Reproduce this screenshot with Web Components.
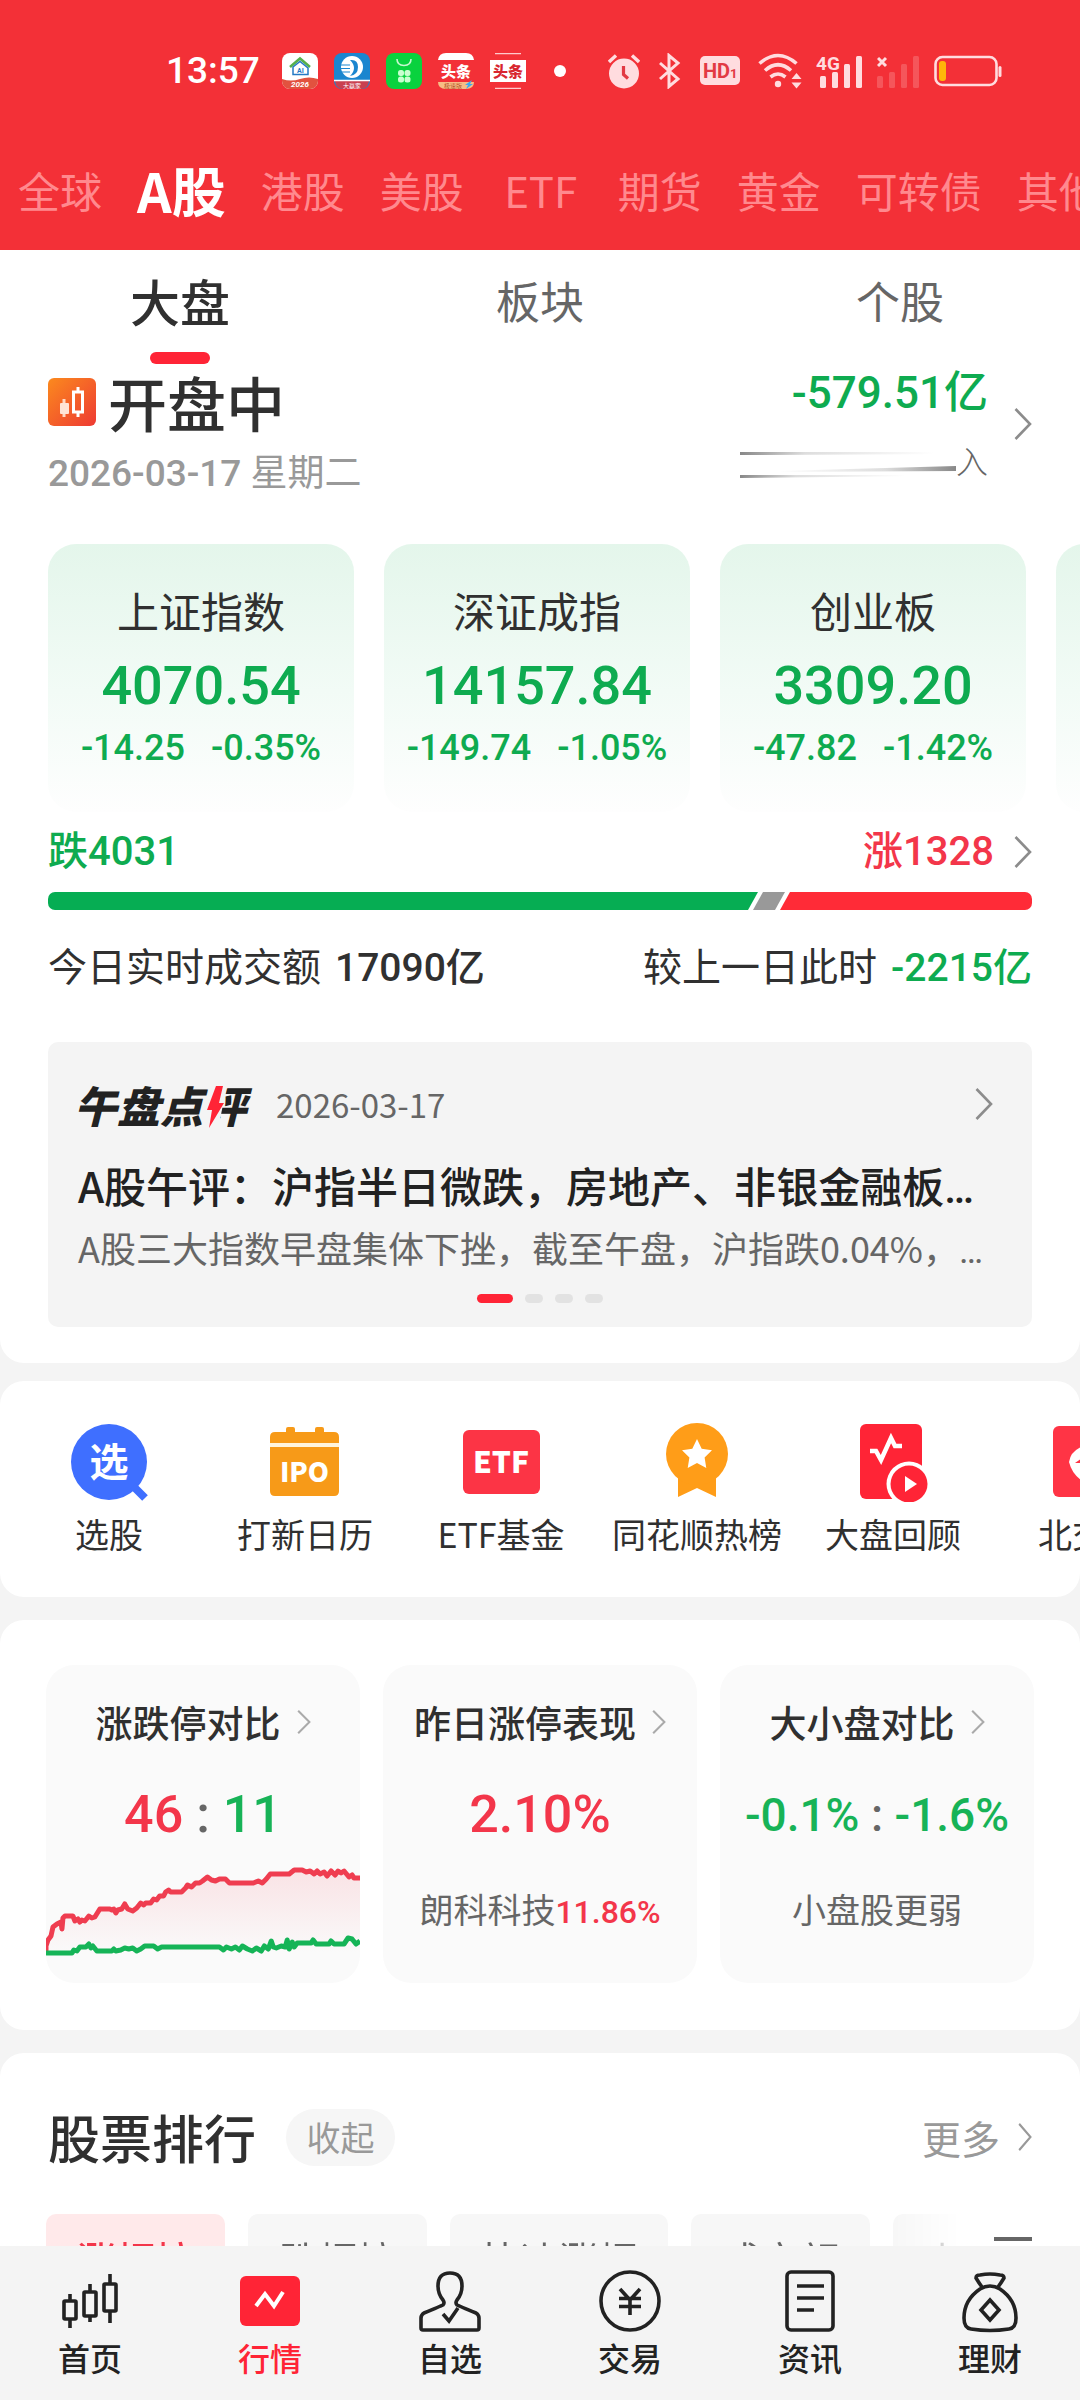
<!DOCTYPE html>
<html lang="zh-CN">
<head>
<meta charset="utf-8">
<meta name="viewport" content="width=device-width, initial-scale=1">
<title>行情 - A股</title>
<style>
  :root {
    --cjk: "Noto Sans CJK SC", "Noto Sans", sans-serif;
    --num: Roboto, "Noto Sans CJK SC", sans-serif;
    --up: #f3364a;
    --bright: #ff2436;
    --down: #0eab50;
    --ink: #303030;
    --muted: #666;
    --faint: #999;
    --page: #f4f4f4;
  }
  body { margin: 0; background: var(--page); font-family: var(--cjk); color: var(--ink); }
</style>
</head>
<body>
<market-app></market-app>

<script>
const BASE = `
  *, *::before, *::after { box-sizing: border-box; }
  button { font: inherit; color: inherit; background: none; border: 0; padding: 0; margin: 0; cursor: pointer; }
  a { color: inherit; text-decoration: none; }
  h1, h2, h3, p { margin: 0; font: inherit; }
  svg { display: block; flex: none; }
`;
function define(name, css, html) {
  customElements.define(name, class extends HTMLElement {
    constructor() {
      super();
      const root = this.attachShadow({ mode: 'open' });
      const t = document.createElement('template');
      t.innerHTML = `<style>${BASE}${css}</style>` + (typeof html === 'function' ? html(this) : html);
      root.append(t.content.cloneNode(true));
    }
  });
}

/* chevron used by every "more" affordance */
define('chevron-icon', `
  :host { display: block; flex: none; width: 18px; height: 32px; color: #8c8c8c; }
  :host([small]) { width: 14px; height: 24px; color: #aaa; }
  :host([medium]) { width: 14px; height: 28px; color: #999; }
  svg { width: 100%; height: 100%; }
`, `<svg viewBox="0 0 18 32" preserveAspectRatio="none" aria-hidden="true"><path d="M1.5 1 16 16 1.5 31" fill="none" stroke="currentColor" stroke-width="2.6"/></svg>`);

define('status-bar', `
  :host { display: flex; align-items: center; height: 142px; padding: 0 78px 0 166px; color: #fff; }
  .time { font: 500 37px/40px var(--num); margin-right: 22px; }
  .apps { display: flex; align-items: center; gap: 16px; }
  .dot { width: 12px; height: 12px; border-radius: 50%; background: #fff; margin-left: 28px; }
  .sys { display: flex; align-items: center; margin-left: auto; gap: 14px; color: #ffdcdf; }
  .wide { display: flex; align-items: center; gap: 18px; margin-right: 4px; }
`, `
  <span class="time">13:57</span>
  <span class="apps">
    <svg width="36" height="36" viewBox="0 0 36 36"><defs><clipPath id="r"><rect width="36" height="36" rx="8"/></clipPath></defs><g clip-path="url(#r)"><rect width="36" height="36" fill="#fff"/><path d="M0 26q9 3 18 0t18 0v10H0z" fill="#e2523f"/></g><path d="M8 14 18 5.500l10 8.500" fill="none" stroke="#57b04a" stroke-width="2.600"/><path d="M11 14 18 8.500l8 6.500v6.500H11z" fill="none" stroke="#2579c4" stroke-width="1.500"/><text x="18.500" y="20" font-family="Roboto" font-size="7" font-weight="700" text-anchor="middle" fill="#2579c4">AI</text><text x="18" y="34" font-family="Roboto" font-style="italic" font-weight="700" font-size="8" text-anchor="middle" fill="#fff">2026</text></svg>
    <svg width="36" height="36" viewBox="0 0 36 36"><rect width="36" height="36" rx="8" fill="#1b86cf"/><path d="M1 28h34q-1 8-8 8H9q-7 0-8-8z" fill="#c9404f"/><path d="M0 27.500h36" stroke="#fff" stroke-width="1.500"/><circle cx="18" cy="14" r="11" fill="#fff"/><path d="M16 7q8-1 8 7t-8 9q4-4 4-8t-4-8z" fill="#1b86cf"/><path d="M7 12h9M7 15.500h9M8 19h8" stroke="#1b86cf" stroke-width="1.200"/><text x="18" y="34.500" font-family="Noto Sans CJK SC" font-size="6" text-anchor="middle" fill="#fff">大赢家</text></svg>
    <svg width="36" height="36" viewBox="0 0 36 36"><rect width="36" height="36" rx="8" fill="#09d23e"/><path d="M11 6q0 6.500 7 6.500T25 6" fill="none" stroke="#c7f8cf" stroke-width="1.600"/><g fill="#c9ffd0"><rect x="12" y="17" width="6" height="6" rx="2.500"/><rect x="18.500" y="17" width="6" height="6" rx="2.500"/><rect x="12" y="23.500" width="6" height="6" rx="2.500"/><rect x="18.500" y="23.500" width="6" height="6" rx="2.500"/></g></svg>
    <svg width="36" height="36" viewBox="0 0 36 36"><path d="M0 7q1-7 8-7h20q7 0 8 7z" fill="#fff"/><path d="M0 29h36q0 7-8 7H8q-8 0-8-7z" fill="#f7bd85"/><text x="18" y="24" font-family="Noto Sans CJK SC" font-weight="900" font-size="15" text-anchor="middle" fill="#fff">头条</text><text x="15" y="35" font-family="Noto Sans CJK SC" font-size="6" text-anchor="middle" fill="#b3552c">极速版</text><path d="m34 27-7 5h3l-2 4 7-5h-3z" fill="#3aa9f0"/></svg>
    <svg width="36" height="36" viewBox="0 0 36 36"><path d="M5 .700h26M5 35.300h26" stroke="#ffc9cc" stroke-width="1.200"/><rect y="7" width="36" height="22" fill="#fff"/><text x="18" y="24" font-family="Noto Sans CJK SC" font-weight="900" font-size="15" text-anchor="middle" fill="#d8262f">头条</text></svg>
  </span>
  <span class="dot"></span>
  <span class="sys">
    <span class="wide">
    <svg width="32" height="36" viewBox="0 0 32 36"><circle cx="16" cy="20.500" r="15" fill="currentColor"/><path d="m1 9 7-6.500M31 9l-7-6.500" stroke="currentColor" stroke-width="3.400"/><path d="M15.500 13v8.500l4.500 4" fill="none" stroke="#e23a44" stroke-width="3.200"/></svg>
    <svg width="24" height="36" viewBox="0 0 24 36"><path d="m2 10 18 16-9 7.500V2.500L20 10 2 26" fill="none" stroke="currentColor" stroke-width="3"/></svg>
    <svg width="40" height="30" viewBox="0 0 40 30"><rect width="40" height="29" rx="5" fill="currentColor"/><text x="3" y="22" font-family="Roboto" font-weight="700" font-size="20" fill="#e23a44">HD</text><text x="30" y="22" font-family="Roboto" font-weight="700" font-size="13" fill="#e23a44">1</text></svg>
    </span>
    <svg width="44" height="36" viewBox="0 0 44 36"><g fill="none" stroke="currentColor" stroke-width="3.600"><path d="M1.500 10.500q18.500-16 37 0"/><path d="M7 17.500q13-11.500 26 0"/><path d="M12.500 24q7.500-6 15 0"/></g><circle cx="20" cy="31" r="3.200" fill="currentColor"/><path d="m38.500 20 5 6h-10zM38.500 35.500l5-6h-10z" fill="currentColor"/></svg>
    <svg width="47" height="36" viewBox="0 0 47 36"><g fill="currentColor"><rect x="4" y="23" width="6" height="12" rx="1.500"/><rect x="16" y="19" width="6" height="16" rx="1.500"/><rect x="28" y="11" width="6" height="24" rx="1.500"/><rect x="40" y="3" width="6" height="32" rx="1.500"/><text x="0" y="17" font-family="Roboto" font-weight="700" font-size="19">4G</text></g></svg>
    <svg width="43" height="36" viewBox="0 0 43 36"><g fill="#fff" opacity=".18"><rect y="23" width="6" height="12" rx="1.500"/><rect x="12" y="19" width="6" height="16" rx="1.500"/><rect x="24" y="11" width="6" height="24" rx="1.500"/><rect x="36" y="3" width="6" height="32" rx="1.500"/></g><path d="m1 5 8 8M9 5l-8 8" stroke="currentColor" stroke-width="3"/></svg>
    <svg width="68" height="32" viewBox="0 0 68 32"><rect x="1.500" y="2" width="61" height="28" rx="7" fill="none" stroke="currentColor" stroke-width="2.600"/><rect x="5" y="6" width="7" height="20" rx="3" fill="#ffb60a"/><rect x="64.500" y="11" width="3" height="11" rx="1.500" fill="currentColor"/></svg>
  </span>
`);

define('market-tabs', `
  :host { display: block; overflow: hidden; }
  nav { display: flex; align-items: center; gap: 35px; height: 108px; padding: 0 0 12px 18px; }
  button { flex: none; min-width: 84px; font-size: 42px; line-height: 60px; color: #ff898e; white-space: nowrap; }
  button[aria-current] { font-size: 54px; font-weight: 700; color: #fff; }
`, `<nav aria-label="市场">
  <button>全球</button><button aria-current="page">A股</button><button>港股</button><button>美股</button><button>ETF</button><button>期货</button><button>黄金</button><button>可转债</button><button>其他</button>
</nav>`);

define('board-tabs', `
  :host { display: block; }
  nav { display: grid; grid-template-columns: repeat(3, 1fr); }
  button { display: flex; flex-direction: column; align-items: center; gap: 22px; padding-top: 20px; font-size: 44px; line-height: 60px; color: var(--muted); }
  button[aria-current] { font-size: 50px; font-weight: 500; color: var(--ink); }
  button::after { content: ""; width: 60px; height: 12px; border-radius: 6px; }
  button[aria-current]::after { background: var(--bright); }
`, `<nav aria-label="板面"><button aria-current="page">大盘</button><button>板块</button><button>个股</button></nav>`);

define('market-head', `
  :host { display: flex; justify-content: space-between; align-items: flex-start; padding: 4px 48px 0; }
  .title { display: flex; align-items: center; gap: 12px; }
  h1 { font-size: 59px; font-weight: 500; line-height: 68px; }
  .date { margin-top: 18px; font: 500 37px/40px var(--num); color: var(--faint); }
  .date span { font-weight: 400; }
  a { display: flex; align-items: center; gap: 26px; }
  .flow { display: flex; flex-direction: column; align-items: flex-end; gap: 22px; }
  .value { font: 500 44px/50px var(--num); color: var(--down); }
  .label { display: flex; align-items: center; font-size: 32px; line-height: 40px; font-weight: 300; color: var(--muted); }
`, `
  <div>
    <div class="title">
      <svg width="48" height="48" viewBox="0 0 48 48"><defs><linearGradient id="g" x1="0" y1="0" x2="1" y2="1"><stop offset="0" stop-color="#fb8a1e"/><stop offset="1" stop-color="#ee3a33"/></linearGradient></defs><rect width="48" height="48" rx="6" fill="url(#g)"/><path d="M16 21v18" stroke="#ffd9c4" stroke-width="3"/><rect x="12" y="25" width="9" height="11" rx="1" fill="#ffe5d6"/><path d="M30 9v5M30 34v5" stroke="#fff" stroke-width="3"/><rect x="25.500" y="14" width="9" height="20" fill="none" stroke="#fff" stroke-width="3"/></svg>
      <h1>开盘中</h1>
    </div>
    <p class="date">2026-03-17 <span>星期二</span></p>
  </div>
  <a href="#flow">
    <div class="flow">
      <span class="value">-579.51亿</span>
      <span class="label">
        <svg width="216" height="40" viewBox="0 0 222 40" preserveAspectRatio="none" aria-hidden="true"><defs><linearGradient id="a"><stop offset="0" stop-color="#888"/><stop offset=".300" stop-color="#ddd"/><stop offset=".900" stop-color="#fff"/></linearGradient><linearGradient id="b"><stop offset="0" stop-color="#fff"/><stop offset=".600" stop-color="#ddd"/><stop offset="1" stop-color="#888"/></linearGradient></defs><path d="M0 12h222v2L0 15z" fill="url(#a)"/><path d="M40 31 222 26v5L40 32z" fill="url(#b)"/><path d="M0 35h190v1L0 38z" fill="url(#a)"/></svg>入
      </span>
    </div>
    <chevron-icon></chevron-icon>
  </a>
`);

define('index-card', `
  :host { display: block; flex: none; width: 306px; padding: 36px 0 46px; border-radius: 28px; background: linear-gradient(#e4f6eb, #f2fbf6 55%, #fefefe); text-align: center; white-space: nowrap; }
  h3 { font-size: 42px; line-height: 60px; }
  .value { margin: 14px 0 12px; font: 500 54px/64px var(--num); color: var(--down); }
  .change { display: flex; justify-content: center; gap: 26px; font: 500 36px/36px var(--num); color: var(--down); }
`, el => `<h3><slot></slot></h3><p class="value">${el.getAttribute('value') || ''}</p><p class="change"><span>${el.getAttribute('diff') || ''}</span><span>${el.getAttribute('rate') || ''}</span></p>`);

define('index-strip', `
  :host { display: flex; gap: 30px; overflow: hidden; margin-top: 50px; padding-left: 48px; }
`, `
  <index-card value="4070.54" diff="-14.25" rate="-0.35%">上证指数</index-card>
  <index-card value="14157.84" diff="-149.74" rate="-1.05%">深证成指</index-card>
  <index-card value="3309.20" diff="-47.82" rate="-1.42%">创业板</index-card>
  <index-card></index-card>
`);

define('market-breadth', `
  :host { display: block; padding: 16px 48px 0; }
  .row { display: flex; justify-content: space-between; align-items: center; font: 500 40px/48px var(--num); }
  .down { color: var(--down); }
  .up { color: var(--up); }
  a { display: flex; align-items: center; gap: 20px; }
  .bar { display: flex; height: 18px; margin: 16px 0 34px; border-radius: 7px; overflow: hidden; }
  .bar i { display: block; }
  .fall { flex: 710; background: #06ad53; clip-path: polygon(0 0, 100% 0, calc(100% - 10px) 100%, 0 100%); }
  .flat { width: 32px; background: #999; margin: 0 -5px; clip-path: polygon(10px 0, 100% 0, calc(100% - 10px) 100%, 0 100%); }
  .rise { flex: 252; background: #ff2b37; clip-path: polygon(10px 0, 100% 0, 100% 100%, 0 100%); }
  .turnover { font-size: 39px; }
  .turnover div { display: flex; gap: 14px; }
  .turnover span { font-weight: 400; }
  .turnover b { font-weight: 500; }
`, `
  <div class="row"><span class="down">跌4031</span><a href="#breadth"><span class="up">涨1328</span><chevron-icon></chevron-icon></a></div>
  <div class="bar"><i class="fall"></i><i class="flat"></i><i class="rise"></i></div>
  <div class="row turnover"><div><span>今日实时成交额</span><b>17090亿</b></div><div><span>较上一日此时</span><b class="down">-2215亿</b></div></div>
`);

define('news-card', `
  :host { display: block; margin: 50px 48px 0; padding: 38px 30px 24px; border-radius: 10px; background: #f4f4f4; }
  a { display: block; }
  .head { display: flex; align-items: center; }
  .logo { position: relative; margin-left: -4px; font-size: 43px; font-weight: 900; font-style: italic; line-height: 48px; color: #222; white-space: nowrap; }
  .logo svg { position: absolute; left: 128px; top: 2px; }
  time { margin-left: 30px; font-size: 33px; line-height: 48px; color: var(--muted); }
  chevron-icon { margin-left: auto; margin-right: 9px; }
  h3 { margin-top: 31px; font-size: 42px; font-weight: 500; line-height: 52px; color: #222; white-space: nowrap; }
  p { margin-top: 14px; font-size: 36px; line-height: 44px; color: var(--muted); white-space: nowrap; }
  .more { font-family: Roboto, sans-serif; line-height: 1; }
  .dots { display: flex; justify-content: center; gap: 12px; margin-top: 25px; }
  .dots i { width: 18px; height: 9px; border-radius: 5px; background: #e2e2e2; }
  .dots i:first-child { width: 36px; background: var(--bright); }
`, `
  <a href="#news">
    <div class="head">
      <span class="logo">午盘点评<svg width="30" height="48" viewBox="0 0 30 48"><path d="M10 2H25L16 48H1z" fill="#f4f4f4"/><path d="M14 4h7l-4 17h5L7 46l3-18H5z" fill="#ff2436"/></svg></span>
      <time datetime="2026-03-17">2026-03-17</time>
      <chevron-icon></chevron-icon>
    </div>
    <h3>A股午评：沪指半日微跌，房地产、非银金融板<span class="more">…</span></h3>
    <p>A股三大指数早盘集体下挫，截至午盘，沪指跌0.04%，<span class="more">…</span></p>
  </a>
  <div class="dots"><i></i><i></i><i></i><i></i></div>
`);

define('quick-entry', `
  :host { display: block; flex: none; width: 196px; }
  a { display: flex; flex-direction: column; align-items: center; gap: 12px; font-size: 34px; line-height: 40px; white-space: nowrap; }
  ::slotted(svg) { display: block; width: 80px; height: 80px; }
`, `<a href="#entry"><slot name="icon"></slot><span><slot></slot></span></a>`);

define('quick-entries', `
  :host { display: flex; overflow: hidden; margin-top: 18px; padding: 41px 0 43px 11px; border-radius: 24px; background: #fff; }
`, `
  <quick-entry><svg slot="icon" viewBox="0 0 80 80"><circle cx="40" cy="40" r="38" fill="#3f6fff"/><path d="m64 64 12 12" stroke="#3f6fff" stroke-width="8"/><text x="40" y="54" font-family="Noto Sans CJK SC" font-weight="700" font-size="39" text-anchor="middle" fill="#fff">选</text></svg>选股</quick-entry>
  <quick-entry><svg slot="icon" viewBox="0 0 80 80"><path d="M5 21V15q0-5 5-5h11V7q0-2 2-2h5q2 0 2 2v3h20V7q0-2 2-2h5q2 0 2 2v3h10q5 0 5 5v6z" fill="#f79a18"/><path d="M5 25h69v44q0 5-5 5H10q-5 0-5-5z" fill="#f79a18"/><path d="M5 21h69v4H5z" fill="#fff4dc"/><text x="39.500" y="60" font-family="Noto Sans CJK SC" font-weight="900" font-size="27" text-anchor="middle" fill="#fff">IPO</text></svg>打新日历</quick-entry>
  <quick-entry><svg slot="icon" viewBox="0 0 80 80"><rect x="2" y="8" width="77" height="64" rx="6" fill="#fc3445"/><text x="40" y="51" font-family="Noto Sans CJK SC" font-weight="900" font-size="30" text-anchor="middle" fill="#fff">ETF</text></svg>ETF基金</quick-entry>
  <quick-entry><svg slot="icon" viewBox="0 0 80 80"><path d="M21 52h38v23L40 66 21 75z" fill="#ff9d18"/><circle cx="40" cy="32" r="31" fill="#ff9d18"/><path d="m40 17 4.700 9.700 10.300 1.500-7.400 7.300 1.700 10.500-9.300-4.900-9.300 4.900 1.700-10.500-7.400-7.300 10.300-1.500z" fill="#fff"/></svg>同花顺热榜</quick-entry>
  <quick-entry><svg slot="icon" viewBox="0 0 80 80"><rect x="7" y="2" width="62" height="75" rx="6" fill="#ff2436"/><path d="M17 29h6l5 9 10-22 4 8h7" fill="none" stroke="#fff" stroke-width="4.500"/><circle cx="56" cy="62" r="22.500" fill="#fff"/><circle cx="56" cy="62" r="18.500" fill="#ff2436"/><path d="m52 54 12 8-12 8z" fill="#fff"/></svg>大盘回顾</quick-entry>
  <quick-entry><svg slot="icon" viewBox="0 0 80 80"><rect x="4" y="4" width="72" height="71" rx="6" fill="#ff3445"/><path d="M20 40q2-14 22-18h14v40H40Q24 56 20 40z" fill="#fff"/><path d="m26 41 7-5v5z" fill="#ff3445"/></svg>北交所</quick-entry>
`);

define('metric-card', `
  :host { display: flex; flex-direction: column; align-items: center; min-width: 0; padding-top: 35px; border-radius: 28px; overflow: hidden; background: #fafafa; white-space: nowrap; }
  h3 { display: flex; align-items: center; gap: 16px; font-size: 37px; font-weight: 500; line-height: 44px; }
  .value { margin-top: 41px; font: 500 52px/60px var(--num); color: var(--muted); }
  :host([compact]) .value { font-size: 46px; }
  ::slotted([slot="note"]) { margin: 46px 0 51px; font: 400 34px/40px var(--num); color: var(--muted); }
`, `<h3><slot></slot><chevron-icon small></chevron-icon></h3><div class="value"><slot name="value"></slot></div><slot name="note"></slot><slot name="chart"></slot>`);

define('trend-chart', `
  :host { display: block; width: 100%; }
  svg { width: 100%; height: 137px; }
`, `<svg viewBox="0 2 315 137" preserveAspectRatio="none" aria-hidden="true">
  <defs><linearGradient id="f" x1="0" y1="0" x2="0" y2="1"><stop offset="0" stop-color="#f3364a" stop-opacity=".120"/><stop offset="1" stop-color="#f3364a" stop-opacity="0"/></linearGradient></defs>
  <path d="M0 109 2 97 7 84 19 73H27L29 78H39L54 66H64L79 62 87 68 97 60 112 54 123 48H136L142 43 162 35 184 40H218L225 31H244L249 27H257L299 30 315 35V110H0z" fill="url(#f)"/>
  <path d="M0 110V103L2 97 5 93 7 84 11 81 15 79 16 86 17 75 19 73H27L29 78 32 76 34 79 36 77 39 78 43 73 46 75 49 74 54 66H64L66 67 68 66 70 70 72 67 76 66 79 61 82 66 87 68 91 65 95 60 98 62 100 60H105L108 56 111 57 114 53 118 53 120 49 123 47 125 49H136L140 45 142 42 146 44 150 40H154L157 38 162 34 166 37 170 38 174 36 180 36 184 40H208L213 38 217 40 221 36 225 31H244L249 27H257L261 29 265 28 269 31 272 28 275 31 279 29 282 33 286 28 290 32 293 28 296 30 299 28 304 34 307 32 309 35H315" fill="none" stroke="#ef3d50" stroke-width="5" stroke-linejoin="round"/>
  <path d="M0 110H26L28 107 31 108 34 104H40L43 101 45 105 47 103 51 108H66L68 106 70 108 75 107 79 105 83 106 87 105 91 108 95 106 99 103H108L112 106 116 104H174L178 107 181 104 186 106 190 104 194 107 197 103 202 106 207 108 211 105 216 108 219 103 223 106 226 98 228 104 231 105 236 103 240 104 242 97 244 106 247 99 249 104 252 100H266L268 97 271 101H284L286 98 289 101H299L303 95 307 96 311 101 315 98" fill="none" stroke="#15b457" stroke-width="5" stroke-linejoin="round"/>
</svg>`);

define('metric-section', `
  :host { display: block; margin-top: 23px; padding: 45px 46px 47px; border-radius: 24px; background: #fff; }
  .grid { display: grid; grid-template-columns: repeat(3, minmax(0, 1fr)); gap: 23px; }
  .up { color: var(--up); }
  .down { color: #17b357; }
  em { font-style: normal; font-weight: 500; font-size: 32px; color: var(--up); }
`, `<div class="grid">
  <metric-card>涨跌停对比<span slot="value"><span class="up">46</span> : <span class="down">11</span></span><trend-chart slot="chart"></trend-chart></metric-card>
  <metric-card>昨日涨停表现<span slot="value" class="up">2.10%</span><span slot="note">朗科科技<em>11.86%</em></span></metric-card>
  <metric-card compact>大小盘对比<span slot="value"><span class="down">-0.1%</span> : <span class="down">-1.6%</span></span><span slot="note">小盘股更弱</span></metric-card>
</div>`);

define('rank-section', `
  :host { display: block; margin-top: 23px; padding: 50px 46px 60px; border-radius: 24px; background: #fff; }
  .head { display: flex; align-items: center; height: 68px; padding-left: 2px; }
  h2 { font-size: 52px; font-weight: 500; line-height: 68px; }
  .fold { margin-left: 30px; width: 109px; height: 57px; border-radius: 29px; background: #f6f6f6; font-size: 34px; line-height: 52px; color: var(--faint); }
  a { display: flex; align-items: center; gap: 18px; margin-left: auto; padding-right: 2px; font-size: 39px; line-height: 56px; color: var(--faint); }
  .filter { display: flex; align-items: flex-start; margin-top: 43px; gap: 34px; padding-right: 2px; }
  .chips { display: flex; flex: 1; min-width: 0; gap: 23px; overflow: hidden; -webkit-mask: linear-gradient(90deg, #000 calc(100% - 66px), transparent); mask: linear-gradient(90deg, #000 calc(100% - 66px), transparent); }
  .chips button { flex: none; height: 88px; padding: 0 31px; border-radius: 10px; background: #f7f7f7; font-size: 39px; line-height: 84px; color: var(--muted); }
  .chips button[aria-pressed="true"] { background: #ffe9ea; color: var(--up); font-weight: 500; }
  .menu { padding-top: 23px; }
`, `
  <div class="head"><h2>股票排行</h2><button class="fold">收起</button><a href="#more">更多<chevron-icon medium></chevron-icon></a></div>
  <div class="filter">
    <div class="chips"><button aria-pressed="true">涨幅榜</button><button>跌幅榜</button><button>快速涨幅</button><button>成交额</button><button>上涨榜</button></div>
    <button class="menu" aria-label="筛选"><svg width="38" height="32" viewBox="0 0 38 32"><path d="M0 2h38M0 16h38M0 30h38" stroke="#666" stroke-width="4"/></svg></button>
  </div>
`);

define('bottom-nav', `
  :host { display: block; flex: none; background: #f4f4f4; }
  nav { display: grid; grid-template-columns: repeat(6, 1fr); height: 154px; padding-top: 23px; }
  a { display: flex; flex-direction: column; align-items: center; gap: 2px; font-size: 32px; font-weight: 500; line-height: 44px; color: #222; }
  a[aria-current] { color: var(--bright); }
  svg { width: 64px; height: 64px; fill: none; stroke: currentColor; stroke-width: 3.600; }
`, `<nav aria-label="主导航">
  <a href="#home"><svg viewBox="0 0 64 64"><rect x="6" y="32" width="12" height="18" rx="1"/><path d="M12 25v7M12 50v9"/><rect x="26" y="23" width="12" height="24" rx="1"/><path d="M32 15v8M32 47v6"/><rect x="46" y="15" width="12" height="27" rx="1"/><path d="M52 5v10M52 42v12"/></svg>首页</a>
  <a href="#market" aria-current="page"><svg viewBox="0 0 64 64"><rect x="2" y="7" width="60" height="50" rx="6" fill="#ff2436" stroke="none"/><path d="m18 37 9-12 9 12 9-14" stroke="#fff" stroke-width="4"/></svg>行情</a>
  <a href="#watch"><svg viewBox="0 0 64 64"><path d="M20 17q0-13 12-13t12 13q0 8-5 14-2 3 0 5 2 1 19 8 3 2 3 5v10q0 2-2 2H5q-2 0-2-2V49q0-3 3-5 17-7 19-8 2-2 0-5-5-6-5-14z"/><path d="m25 45 6 7 9-13"/></svg>自选</a>
  <a href="#trade"><svg viewBox="0 0 64 64"><circle cx="32" cy="32" r="29"/><path d="m22 20 10 11 10-11M32 31v15M21 29.500h22M21 37.500h22"/></svg>交易</a>
  <a href="#info"><svg viewBox="0 0 64 64"><rect x="9" y="3" width="46" height="58" rx="4"/><path d="M19 17h27M19 29h27M19 41h17"/></svg>资讯</a>
  <a href="#wealth"><svg viewBox="0 0 64 64"><path d="M24 18q-3-4-6-9 0-3 4-3 10-2 20 0 4 0 4 3-3 5-6 9"/><path d="M22 20q10-6 20 0Q58 31 58 49q0 10-7 11-19 3-38 0-7-1-7-11 0-18 16-29z"/><path d="m32 31 9 10-9 10-9-10z"/></svg>理财</a>
</nav>`);

define('market-app', `
  :host { display: flex; flex-direction: column; height: 100vh; overflow: hidden; }
  header { flex: none; background: #f33037; }
  main { flex: 1; min-height: 0; overflow: hidden; }
  .overview { padding-bottom: 36px; border-radius: 0 0 24px 24px; background: #fff; }
`, `
  <header><status-bar></status-bar><market-tabs></market-tabs></header>
  <main>
    <section class="overview">
      <board-tabs></board-tabs>
      <market-head></market-head>
      <index-strip></index-strip>
      <market-breadth></market-breadth>
      <news-card></news-card>
    </section>
    <quick-entries></quick-entries>
    <metric-section></metric-section>
    <rank-section></rank-section>
  </main>
  <bottom-nav></bottom-nav>
`);
</script>
</body>
</html>
